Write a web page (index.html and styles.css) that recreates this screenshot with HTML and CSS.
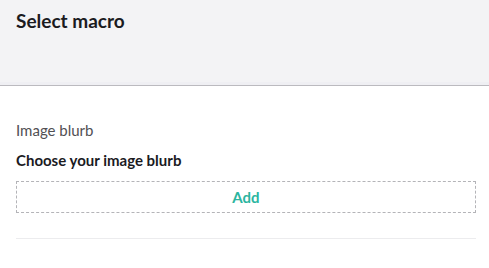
FILE: index.html
```html
<!DOCTYPE html>
<html lang="en">
<head>
<meta charset="UTF-8" />
<meta name="viewport" content="width=device-width, initial-scale=1" />
<title>Select macro</title>
<link rel="stylesheet" href="styles.css">
</head>
<body>
<div class="dialog">

    <!-- Header -->
    <div class="dialog-header">
        <h1>Select macro</h1>
    </div>

    <!-- Macro parameters -->
    <div class="dialog-body">
        <div class="param">
            <div class="param-label">Image blurb</div>
            <div class="param-title">Choose your image blurb</div>
            <button class="add-btn" type="button">Add</button>
        </div>
        <hr class="divider" />
    </div>

</div>
</body>
</html>
```

FILE: styles.css
```css
body {
    font-family: Lato, "Open Sans", sans-serif;
    background: #fff;
    margin: 0; padding: 0;
    color: #1b1b1f;
}
.dialog {
    width: 489px;
}
.dialog-header {
    background: #f3f3f5;
    height: 86px;
    border-bottom: 1px solid #bbbabf;
    box-shadow: inset 0 -3px 0 #efeff3;
    padding: 0 16px;
    box-sizing: border-box;
}
.dialog-header h1 {
    margin: 0;
    padding-top: 8px;
    font-size: 19px;
    line-height: 26px;
    font-weight: bold;
}
.dialog-body {
    padding: 34px 13px 0 16px;
}
.param-label {
    font-size: 15px;
    line-height: 20px;
    color: #515054;
}
.param-title {
    margin-top: 10px;
    font-size: 15px;
    line-height: 20px;
    font-weight: bold;
}
.add-btn {
    display: block;
    width: 100%;
    height: 32px;
    margin-top: 11px;
    background: #fff;
    border: 1px dashed #b4b4b8;
    font-family: inherit;
    font-size: 15px;
    font-weight: bold;
    color: #2bb5a0;
    cursor: pointer;
}
.divider {
    margin: 25px 0 0;
    border: none;
    border-top: 1px solid #ececee;
}
```
